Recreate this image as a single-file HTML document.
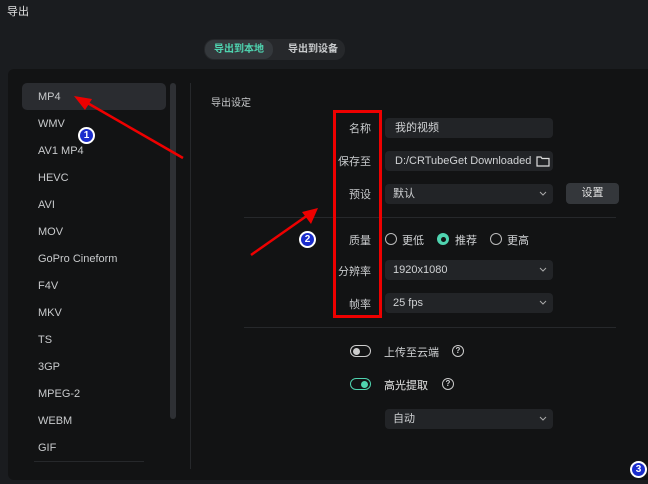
<!DOCTYPE html><html><head><meta charset="utf-8"><style>
*{margin:0;padding:0;box-sizing:border-box}
body{width:648px;height:484px;background:#1a1c1f;position:relative;overflow:hidden;font-family:"Liberation Sans","Noto Sans CJK SC",sans-serif;color:#d0d2d4;font-size:11px}
.a{position:absolute}
.panel{left:8px;top:69px;width:645px;height:411px;background:#121314;border-radius:6px}
.it{position:absolute;left:38px;font-size:11px;color:#c8cacc}
.lab{position:absolute;right:277px;font-size:11px;color:#c8cacc;text-align:right}
.inp{position:absolute;left:385px;width:168px;height:20px;background:#222427;border-radius:4px;font-size:11px;color:#d0d2d4;padding:0 0 0 8px;line-height:20px}
.chev{position:absolute;right:6px;top:7px}
.line{position:absolute;height:1px;background:#26282b}
.circ{position:absolute;width:17px;height:17px;border-radius:50%;background:#1a2ccc;border:2px solid #fff;color:#fff;font-weight:bold;font-size:10px;text-align:center;line-height:13px}
</style></head><body>
<div class="a" style="left:7px;top:3px;font-size:11px;color:#e0e0e0">导出</div>
<div class="a" style="left:204px;top:39px;width:141px;height:21px;background:#26282b;border-radius:10px"></div>
<div class="a" style="left:205px;top:40px;width:68px;height:19px;background:#34383c;border-radius:9px;color:#4fd4b0;font-size:10px;text-align:center;line-height:19px;font-weight:bold">导出到本地</div>
<div class="a" style="left:288px;top:40px;width:56px;height:19px;color:#c8cacc;font-size:10px;line-height:19px;font-weight:bold">导出到设备</div>
<div class="a panel"></div>
<div class="a" style="left:22px;top:83px;width:144px;height:27px;background:#2a2c30;border-radius:5px"></div>
<div class="a" style="left:170px;top:83px;width:6px;height:336px;background:#2e3034;border-radius:3px"></div>
<div class="a" style="left:190px;top:83px;width:1px;height:386px;background:#26282b"></div>
<div class="line" style="left:34px;top:461px;width:110px"></div>
<div class="it" style="top:91px">MP4</div>
<div class="it" style="top:118px">WMV</div>
<div class="it" style="top:145px">AV1 MP4</div>
<div class="it" style="top:172px">HEVC</div>
<div class="it" style="top:199px">AVI</div>
<div class="it" style="top:226px">MOV</div>
<div class="it" style="top:253px">GoPro Cineform</div>
<div class="it" style="top:280px">F4V</div>
<div class="it" style="top:307px">MKV</div>
<div class="it" style="top:334px">TS</div>
<div class="it" style="top:361px">3GP</div>
<div class="it" style="top:388px">MPEG-2</div>
<div class="it" style="top:415px">WEBM</div>
<div class="it" style="top:442px">GIF</div>
<div class="a" style="left:211px;top:94px;font-size:10px;color:#c8cacc">导出设定</div>
<div class="lab" style="top:120px">名称</div>
<div class="lab" style="top:153px">保存至</div>
<div class="lab" style="top:186px">预设</div>
<div class="lab" style="top:232px">质量</div>
<div class="lab" style="top:263px">分辨率</div>
<div class="lab" style="top:296px">帧率</div>
<div class="inp" style="top:118px;padding-left:10px">我的视频</div>
<div class="inp" style="top:151px;padding-left:10px">D:/CRTubeGet Downloaded<svg style="position:absolute;right:3px;top:4px" width="14" height="12" viewBox="0 0 14 12"><path d="M1 2h4l1 1.5h7V11H1z" fill="none" stroke="#ddd" stroke-width="1.2"/></svg></div>
<div class="inp" style="top:184px">默认<svg class="chev" width="8" height="5"><path d="M1 1l3 3 3-3" fill="none" stroke="#aaa"/></svg></div>
<div class="a" style="left:566px;top:183px;width:53px;height:21px;background:#34373b;border-radius:4px;text-align:center;line-height:21px;color:#e0e0e0">设置</div>
<div class="line" style="left:244px;top:217px;width:372px"></div>
<div class="a" style="left:385px;top:233px;width:12px;height:12px;border:1.3px solid #bbb;border-radius:50%"></div>
<div class="a" style="left:402px;top:232px">更低</div>
<div class="a" style="left:437px;top:233px;width:12px;height:12px;background:#4fd4b0;border-radius:50%"><div style="margin:3.5px;width:5px;height:5px;background:#121314;border-radius:50%"></div></div>
<div class="a" style="left:455px;top:232px">推荐</div>
<div class="a" style="left:490px;top:233px;width:12px;height:12px;border:1.3px solid #bbb;border-radius:50%"></div>
<div class="a" style="left:507px;top:232px">更高</div>
<div class="inp" style="top:260px">1920x1080<svg class="chev" width="8" height="5"><path d="M1 1l3 3 3-3" fill="none" stroke="#aaa"/></svg></div>
<div class="inp" style="top:293px">25 fps<svg class="chev" width="8" height="5"><path d="M1 1l3 3 3-3" fill="none" stroke="#aaa"/></svg></div>
<div class="line" style="left:244px;top:327px;width:372px"></div>
<div class="a" style="left:350px;top:345px;width:21px;height:12px;border:1.3px solid #ccc;border-radius:6px"><div style="margin:1.5px;width:7px;height:7px;background:#ccc;border-radius:50%"></div></div>
<div class="a" style="left:384px;top:344px">上传至云端</div>
<div class="a" style="left:452px;top:345px;width:12px;height:12px;border:1.3px solid #ccc;border-radius:50%;font-size:8px;text-align:center;line-height:10px;font-weight:bold">?</div>
<div class="a" style="left:350px;top:378px;width:21px;height:12px;border:1.3px solid #4fd4b0;border-radius:6px"><div style="margin:1.5px 0 0 10px;width:7px;height:7px;background:#4fd4b0;border-radius:50%"></div></div>
<div class="a" style="left:384px;top:377px;color:#e8e8e8">高光提取</div>
<div class="a" style="left:442px;top:378px;width:12px;height:12px;border:1.3px solid #ccc;border-radius:50%;font-size:8px;text-align:center;line-height:10px;font-weight:bold">?</div>
<div class="inp" style="top:409px">自动<svg class="chev" width="8" height="5"><path d="M1 1l3 3 3-3" fill="none" stroke="#aaa"/></svg></div>
<div class="a" style="left:333px;top:110px;width:49px;height:208px;border:3px solid #e00"></div>
<svg class="a" style="left:0;top:0" width="648" height="484"><g stroke="#e00" stroke-width="2.5" fill="#e00"><line x1="183" y1="158" x2="84" y2="101"/><polygon points="74,96 92,99 85,110" stroke="none"/><line x1="251" y1="255" x2="308" y2="215"/><polygon points="318,208 311,224 302,212" stroke="none"/></g></svg>
<div class="circ" style="left:78px;top:127px">1</div>
<div class="circ" style="left:299px;top:231px">2</div>
<div class="circ" style="left:630px;top:461px">3</div>
</body></html>
